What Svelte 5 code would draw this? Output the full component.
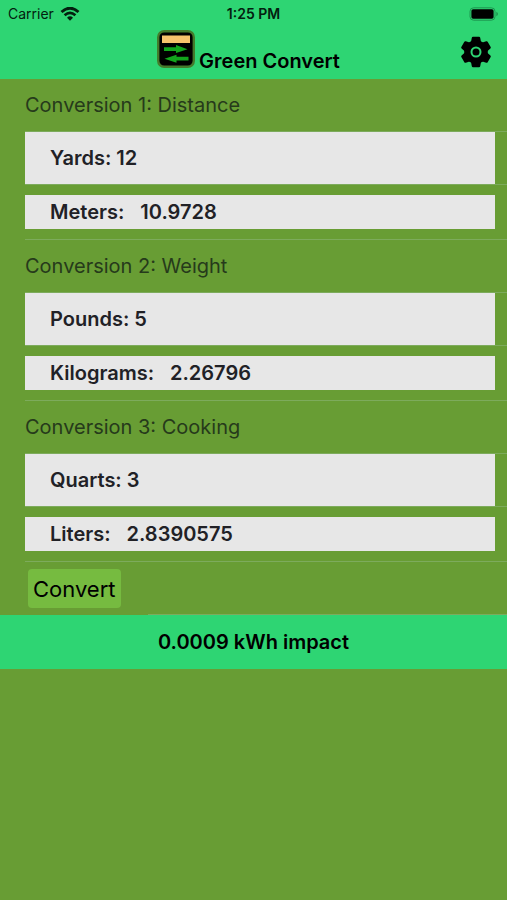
<script>
  const conversions = $state([
    { id: 'distance', title: 'Distance', from: 'Yards', to: 'Meters', factor: 0.9144, value: '12', result: '10.9728' },
    { id: 'weight', title: 'Weight', from: 'Pounds', to: 'Kilograms', factor: 0.453592, value: '5', result: '2.26796' },
    { id: 'cooking', title: 'Cooking', from: 'Quarts', to: 'Liters', factor: 0.9463525, value: '3', result: '2.8390575' },
  ]);

  function convert() {
    for (const c of conversions) {
      const n = Number(c.value);
      c.result = Number.isNaN(n) ? '' : String(Number((n * c.factor).toFixed(7)));
    }
  }
</script>

<header>
  <div class="status">
    <div class="carrier">
      <span>Carrier</span>
      <svg width="20" height="14" viewBox="0 0 20 14" aria-hidden="true">
        <path d="M1.5 5Q10-2.6 18.5 5" fill="none" stroke="#03200f" stroke-width="2.9" />
        <path d="M4.6 8.3Q10 3.5 15.4 8.3" fill="none" stroke="#03200f" stroke-width="2.7" />
        <path d="M7 10.7Q10 8 13 10.7L10 13.8Z" fill="#03200f" />
      </svg>
    </div>
    <span class="time">1:25 PM</span>
    <svg class="battery" width="30" height="14" viewBox="0 0 30 14" aria-hidden="true">
      <rect x="1" y="0.8" width="25" height="12.4" rx="3.6" fill="none" stroke="#1e9650" />
      <rect x="2.4" y="2.2" width="22.2" height="9.6" rx="1.8" fill="#000" />
      <path d="M27.3 4.8Q29 5.5 29 7T27.3 9.2Z" fill="#1e9650" />
    </svg>
  </div>

  <div class="navbar">
    <div class="brand">
      <svg width="38" height="38" viewBox="0 0 38 38" aria-hidden="true">
        <rect x="1.2" y="1.2" width="35.6" height="35.6" rx="6" fill="#000" stroke="#447b2b" stroke-width="2.4" />
        <rect x="5" y="5.5" width="28" height="7.5" fill="#f6c36c" />
        <path d="M7 17.3H19V15L30.5 19.2L19 23V21H7Z" fill="#12a51c" />
        <path d="M31.5 26.7H19.5V24.7L7.5 28.7L19.5 32.7V30.5H31.5Z" fill="#12a51c" />
      </svg>
      <h1>Green Convert</h1>
    </div>
    <button class="settings" aria-label="Settings">
      <svg width="32" height="32" viewBox="0 0 32 32" aria-hidden="true">
        <g fill="#000">
          <circle cx="16" cy="16" r="11.8" />
          {#each [0, 60, 120, 180, 240, 300] as angle}
            <path d="M10.6 8L11.8 1.8Q12 .8 13 .8H19Q20 .8 20.2 1.8L21.4 8Z" transform="rotate({angle} 16 16)" />
          {/each}
        </g>
        <circle cx="16" cy="16" r="4.5" fill="#000" stroke="#2ed573" stroke-width="2" />
      </svg>
    </button>
  </div>
</header>

<main>
  {#each conversions as c, i (c.id)}
    <section>
      <h2>Conversion {i + 1}: {c.title}</h2>
      <div class="row">
        <div class="field">
          <label for={c.id}>{c.from}:</label>
          <input id={c.id} type="text" inputmode="decimal" bind:value={c.value} />
        </div>
      </div>
      <div class="row result">
        <div class="field">
          <span>{c.to}:</span>
          <output for={c.id}>{c.result}</output>
        </div>
      </div>
    </section>
  {/each}
  <div class="actions">
    <button class="convert" onclick={convert}>Convert</button>
    <div class="separator"></div>
  </div>
</main>

<footer>0.0009 kWh impact</footer>

<style>
  :global(body) {
    background: #689d34;
    font-family: Inter, "Liberation Sans", sans-serif;
    color: #000;
  }

  header,
  footer {
    background: #2ed573;
  }

  .status {
    display: grid;
    grid-template-columns: 1fr auto 1fr;
    align-items: center;
    height: 27px;
    padding: 0 8px;
    font-size: 14px;
    color: #03200f;
  }

  .carrier {
    display: flex;
    align-items: center;
    gap: 6px;
  }

  .time {
    font-weight: 600;
  }

  .battery {
    justify-self: end;
  }

  .navbar {
    display: grid;
    grid-template-columns: 1fr auto 1fr;
    height: 52px;
    padding: 0 15px 0 5px;
  }

  .brand {
    display: flex;
    grid-column: 2;
    align-items: flex-start;
    gap: 4px;
    padding-top: 3px;
  }

  h1 {
    margin: 19px 0 0;
    font-size: 20px;
    line-height: 24px;
    font-weight: 600;
  }

  .settings {
    justify-self: end;
    align-self: start;
    margin-top: 9px;
    padding: 0;
    border: none;
    background: none;
    cursor: pointer;
  }

  .settings svg {
    display: block;
  }

  main {
    padding-left: 25px;
  }

  section {
    border-bottom: 1px solid #7dab5c;
  }

  h2 {
    margin: 0;
    font-size: 20px;
    line-height: 52px;
    font-weight: 400;
    color: #263a1b;
  }

  .row {
    padding-right: 12px;
    border: solid #7dab5c;
    border-width: 1px 0;
  }

  .result {
    padding-top: 10px;
    padding-bottom: 10px;
    border: none;
  }

  .field {
    display: flex;
    align-items: center;
    gap: 5px;
    height: 52px;
    padding: 0 25px;
    background: #e7e7e7;
    font-size: 20px;
    font-weight: 600;
    color: #212126;
  }

  .result .field {
    gap: 16px;
    height: 34px;
  }

  input {
    flex: 1;
    min-width: 0;
    padding: 0;
    border: none;
    outline: none;
    background: none;
    font: inherit;
    color: inherit;
  }

  .actions {
    display: flex;
  }

  .convert {
    height: 39px;
    margin: 7px 3px;
    padding: 0 5px;
    border: none;
    border-radius: 4px;
    background: #76bb40;
    font-family: inherit;
    font-size: 22px;
    color: #000;
    cursor: pointer;
  }

  .separator {
    flex: 1;
    margin-left: 24px;
    border-bottom: 1px solid #7dab5c;
  }

  footer {
    line-height: 54px;
    font-size: 20px;
    font-weight: 600;
    text-align: center;
  }
</style>
